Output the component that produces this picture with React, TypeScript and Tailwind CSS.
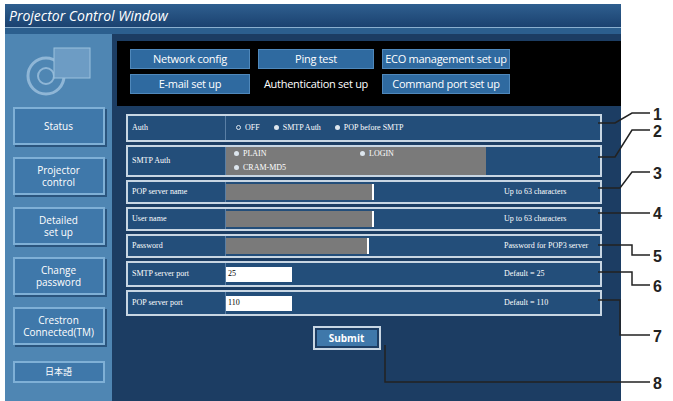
const SideBtn = ({ label }: { label: React.ReactNode }) => (
  <div className="h-[38px] w-[92px] border-2 border-[#7fb0d6] bg-[#3f78aa] flex items-center justify-center text-center text-[10px] leading-[12px] text-white shadow-[2px_2px_0_#2b557e]">
    {label}
  </div>
);

const Tab = ({ label, active = false, w }: { label: string; active?: boolean; w: string }) => (
  <div
    className={`${w} h-[20px] flex items-center justify-center text-[11px] tracking-tight ${
      active ? 'bg-black text-white' : 'bg-[#2f6aa0] text-white border border-[#4f88bb]'
    }`}
  >
    {label}
  </div>
);

const Row = ({
  h,
  label,
  children,
  note,
}: {
  h: string;
  label: string;
  children?: React.ReactNode;
  note?: string;
}) => (
  <div className={`${h} flex border-2 border-[#c8d6e3] bg-[#234e7a] text-[8px] text-white`} style={{ fontFamily: '"Liberation Serif", serif' }}>
    <div className="w-[98px] flex items-center pl-1 border-r border-[#5a7fa5]">{label}</div>
    <div className="flex-1 flex items-center">{children}</div>
    {note && <div className="w-[100px] flex items-center pl-1 whitespace-nowrap overflow-hidden">{note}</div>}
  </div>
);

const Dot = ({ filled = true }: { filled?: boolean }) => (
  <span className={`inline-block w-[5px] h-[5px] rounded-full mr-1 ${filled ? 'bg-[#dde6ee]' : 'border border-[#dde6ee]'}`} />
);

export default function App() {
  return (
    <div className="relative w-[673px] h-[401px] bg-white overflow-hidden" style={{ fontFamily: '"Open Sans", "Liberation Sans", sans-serif' }}>
      <div className="absolute left-[5px] top-[4px] w-[616px] h-[397px] flex flex-col bg-[#1c3d63]">
        <div className="h-[24px] bg-gradient-to-b from-[#2f5f8f] to-[#1b4270] flex items-center pl-1 text-[14px] italic text-white border-b border-[#8bb0d0]">
          Projector Control Window
        </div>
        <div className="h-[6px] bg-[#2c5f8e]" />
        <div className="flex flex-1">
          <div className="w-[107px] bg-[#4f86b3] flex flex-col items-center pt-[8px]">
            <div className="h-[60px] w-[90px] flex items-center justify-center">
              <svg width="70" height="56" viewBox="0 0 70 56">
                <circle cx="22" cy="32" r="18" fill="none" stroke="#8fb6d6" strokeWidth="3" />
                <circle cx="22" cy="32" r="8" fill="none" stroke="#8fb6d6" strokeWidth="2" />
                <rect x="30" y="4" width="36" height="30" fill="#6d9cc4" stroke="#9cc1de" />
              </svg>
            </div>
            <div className="flex flex-col gap-[12px] mt-[5px]">
              <SideBtn label="Status" />
              <SideBtn label={<>Projector<br />control</>} />
              <SideBtn label={<>Detailed<br />set up</>} />
              <SideBtn label={<>Change<br />password</>} />
              <SideBtn label={<>Crestron<br />Connected(TM)</>} />
            </div>
            <div className="mt-[16px] h-[22px] w-[92px] border-2 border-[#7fb0d6] bg-[#3f78aa] flex items-center justify-center text-[9px] text-white" style={{ fontFamily: '"Noto Sans CJK JP", sans-serif' }}>
              日本語
            </div>
          </div>
          <div className="flex-1 flex flex-col">
            <div className="ml-[5px] mt-[7px] h-[65px] bg-black flex flex-col gap-[5px] pl-[13px] pt-[8px]">
              <div className="flex gap-[8px]">
                <Tab label="Network config" w="w-[120px]" />
                <Tab label="Ping test" w="w-[116px]" />
                <Tab label="ECO management set up" w="w-[128px]" />
              </div>
              <div className="flex gap-[8px]">
                <Tab label="E-mail set up" w="w-[120px]" />
                <Tab label="Authentication set up" w="w-[116px]" active />
                <Tab label="Command port set up" w="w-[128px]" />
              </div>
            </div>
            <div className="ml-[14px] mr-[19px] mt-[8px] flex flex-col gap-[3px]">
              <Row h="h-[28px]" label="Auth">
                <div className="flex gap-[14px] pl-[10px]">
                  <span><Dot filled={false} />OFF</span>
                  <span><Dot />SMTP Auth</span>
                  <span><Dot />POP before SMTP</span>
                </div>
              </Row>
              <Row h="h-[32px]" label="SMTP Auth">
                <div className="h-full w-[260px] bg-[#7a7a7a] grid grid-cols-2 content-center pl-[8px] gap-y-[2px]">
                  <span><Dot />PLAIN</span>
                  <span><Dot />LOGIN</span>
                  <span><Dot />CRAM-MD5</span>
                </div>
              </Row>
              <Row h="h-[24px]" label="POP server name" note="Up to 63 characters">
                <div className="h-[16px] w-[148px] bg-[#7a7a7a] border-r-2 border-white" />
              </Row>
              <Row h="h-[24px]" label="User name" note="Up to 63 characters">
                <div className="h-[16px] w-[148px] bg-[#7a7a7a] border-r-2 border-white" />
              </Row>
              <Row h="h-[24px]" label="Password" note="Password for POP3 server">
                <div className="h-[16px] w-[143px] bg-[#7a7a7a] border-r-2 border-white" />
              </Row>
              <Row h="h-[26px]" label="SMTP server port" note="Default = 25">
                <div className="h-[15px] w-[66px] bg-white text-black pl-[2px] flex items-center">25</div>
              </Row>
              <Row h="h-[26px]" label="POP server port" note="Default = 110">
                <div className="h-[15px] w-[66px] bg-white text-black pl-[2px] flex items-center">110</div>
              </Row>
            </div>
            <div className="flex justify-center mt-[10px] pr-[40px]">
              <div className="border-2 border-[#c8d6e3] p-[2px]">
                <div className="w-[60px] h-[16px] bg-[#3f78aa] text-white text-[10px] font-bold flex items-center justify-center">Submit</div>
              </div>
            </div>
          </div>
        </div>
      </div>
      <svg className="absolute inset-0" width="673" height="401" viewBox="0 0 673 401" fill="none" stroke="#222" strokeWidth="1.5">
        <path d="M598 123 H615 L632 113 H650" />
        <path d="M598 157 H615 L632 130 H650" />
        <path d="M598 188 H620 L632 172 H650" />
        <path d="M598 213 H650" />
        <path d="M598 245 H632 V255 H650" />
        <path d="M598 272 H632 V285 H650" />
        <path d="M598 300 H620 V335 H650" />
        <path d="M385 345 V382 H650" />
        <g fill="#222" stroke="none" fontFamily="Liberation Sans, sans-serif" fontSize="16" fontWeight="bold">
          <text x="653" y="120">1</text>
          <text x="653" y="137">2</text>
          <text x="653" y="179">3</text>
          <text x="653" y="219">4</text>
          <text x="653" y="262">5</text>
          <text x="653" y="292">6</text>
          <text x="653" y="342">7</text>
          <text x="653" y="389">8</text>
        </g>
      </svg>
    </div>
  );
}
